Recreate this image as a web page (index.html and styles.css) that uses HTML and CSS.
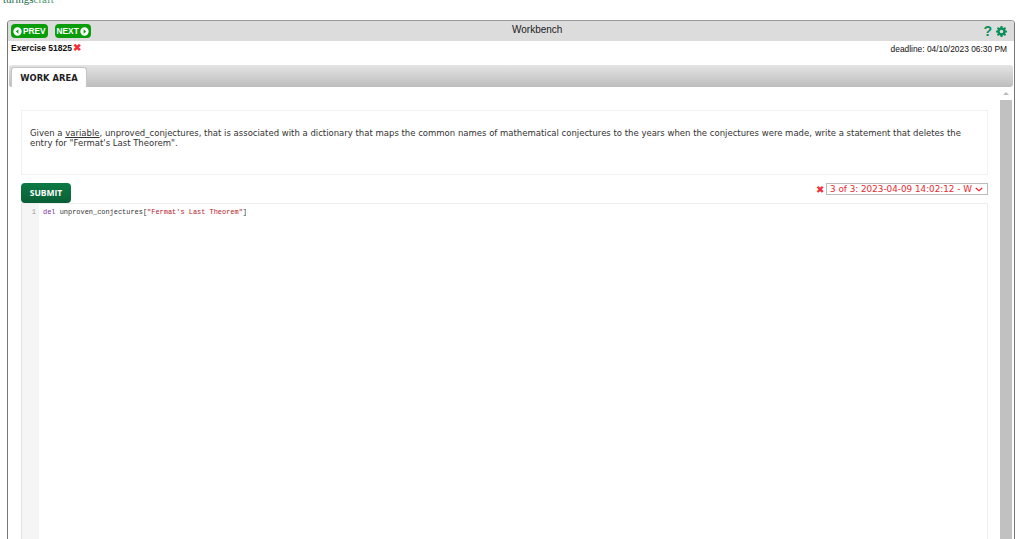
FILE: index.html
```html
<!DOCTYPE html>
<html lang="en">
<head>
<meta charset="utf-8">
<title>Workbench</title>
<link rel="stylesheet" href="styles.css">
</head>
<body>
<header class="logo-bar"><span class="logo">turings<span class="logo-light">craft</span></span></header>
<main class="panel">
  <div class="title-bar">
    <div class="nav">
      <a class="nav-btn"><svg class="nav-icon" viewBox="0 0 10 10"><circle cx="5" cy="5" r="4.6" fill="#fff"/><path d="M6 2.4 3.2 5 6 7.6z" fill="#0a9d0a"/></svg>PREV</a>
      <a class="nav-btn">NEXT<svg class="nav-icon" viewBox="0 0 10 10"><circle cx="5" cy="5" r="4.6" fill="#fff"/><path d="M4 2.4 6.8 5 4 7.6z" fill="#0a9d0a"/></svg></a>
    </div>
    <div class="title">Workbench</div>
    <div class="tools">
      <span class="help">?</span>
      <svg class="gear" viewBox="0 0 12 12"><path fill="#0a8f5b" fill-rule="evenodd" d="M5 0h2l.3 1.6 1.1.5L9.8 1.200 11 2.600 10 3.800l.4 1.200L12 5.200v1.800l-1.600.2-.4 1.100 1 1.300-1.300 1.300-1.300-1-1.100.5L7 12H5l-.3-1.600-1.100-.5-1.300 1L1 9.600l1-1.300-.5-1.100L0 7V5.200l1.500-.2.500-1.200-1-1.200 1.300-1.400 1.300.9 1.100-.5zM6 4a2 2 0 1 0 0 4 2 2 0 0 0 0-4z"/></svg>
    </div>
  </div>
  <div class="info-row">
    <div class="exercise">Exercise 51825<span class="cross">✖</span></div>
    <div class="deadline">deadline: 04/10/2023 06:30 PM</div>
  </div>
  <div class="tab-bar"><div class="tab">WORK AREA</div></div>
  <div class="body-row">
    <div class="content">
      <section class="problem">
        <p>Given a <u>variable</u>, unproved_conjectures, that is associated with a dictionary that maps the common names of mathematical conjectures to the years when the conjectures were made, write a statement that deletes the entry for "Fermat's Last Theorem".</p>
      </section>
      <div class="actions">
        <button class="submit">SUBMIT</button>
        <div class="attempt">
          <span class="cross">✖</span>
          <div class="select"><span class="select-text">3 of 3: 2023-04-09 14:02:12 - W</span><svg class="chevron" viewBox="0 0 10 6"><path d="M1 1l4 3.500L9 1" fill="none" stroke="#e8282f" stroke-width="1.600"/></svg></div>
        </div>
      </div>
      <div class="editor">
        <div class="gutter">1</div>
        <div class="code"><span class="kw">del</span> unproven_conjectures[<span class="str">"Fermat's Last Theorem"</span>]</div>
      </div>
    </div>
    <div class="scrollbar">
      <div class="arrow"></div>
      <div class="thumb"></div>
    </div>
  </div>
</main>
</body>
</html>
```
FILE: styles.css
```css
* { box-sizing: border-box; }
html, body { margin: 0; height: 539px; overflow: hidden; background: #fff; }
body { font-family: "Liberation Sans", Arial, sans-serif; color: #111; }

.logo-bar { height: 20px; padding-left: 3px; overflow: hidden; }
.logo { display: block; margin-top: -9px; font: 11px/16px "Liberation Serif", serif; color: #1d6b4a; }
.logo-light { color: #4f9a72; }

.panel {
  margin: 0 9px 0 7px;
  height: 519px;
  border: 1px solid #777;
  border-bottom: 0;
  border-top-color: #999;
  border-radius: 4px 4px 0 0;
  display: flex;
  flex-direction: column;
  overflow: hidden;
}

.title-bar {
  height: 20px;
  flex: none;
  background: #dcdcdc;
  display: grid;
  grid-template-columns: 501px auto 1fr;
  align-items: center;
  padding: 0 7px 0 3px;
}
.nav { display: flex; gap: 7px; }
.nav-btn {
  display: flex;
  align-items: center;
  gap: 1px;
  height: 14px;
  padding: 0 2px;
  background: #0a9d0a;
  border-radius: 4px;
  color: #fff;
  font-size: 8.300px;
  font-weight: 700;
}
.nav-icon { width: 9px; height: 9px; }
.title { font-size: 10px; line-height: 12px; padding-bottom: 2px; color: #222; }
.tools { display: flex; justify-content: flex-end; align-items: center; gap: 4px; }
.help { color: #0a8f5b; font-size: 14px; line-height: 14px; font-weight: 700; }
.gear { width: 11px; height: 11px; }

.info-row {
  height: 24px;
  flex: none;
  display: flex;
  justify-content: space-between;
  padding: 2px 7px 0 3px;
  font-size: 8.500px;
  line-height: 10px;
}
.exercise { font-weight: 700; }
.deadline { padding-top: 1px; font-size: 8.400px; }
.cross { color: #f2303a; font-size: 10px; margin-left: 1px; }

.tab-bar {
  height: 22px;
  flex: none;
  margin: 0 1px;
  padding: 2px 0 0 2px;
  background: linear-gradient(#e4e4e4, #bdbdbd);
  border-radius: 3px;
}
.tab {
  width: 76px;
  height: 20px;
  background: #fff;
  border: 1px solid #c4c4c4;
  border-bottom: 0;
  border-radius: 3px 3px 0 0;
  text-align: center;
  font: 700 8.400px/20px "DejaVu Sans", sans-serif;
  color: #222;
}

.body-row { flex: 1; display: flex; min-height: 0; }
.content { flex: 1; min-width: 0; padding: 23px 12px 0 13px; }
.problem {
  height: 65px;
  border: 1px solid #f1f1f1;
  padding: 17px 8px 0;
}
.problem p { margin: 0; font: 8.500px/10px "DejaVu Sans", Verdana, sans-serif; color: #333; }
.actions {
  height: 28px;
  padding-top: 8px;
  display: flex;
  justify-content: space-between;
  align-items: flex-start;
}
.submit {
  width: 50px;
  height: 20px;
  border: 0;
  padding: 0 0 1px;
  border-radius: 4px;
  background: linear-gradient(#0c7a45, #0a5e35);
  color: #fff;
  font: 700 8.500px "Open Sans", sans-serif;
}
.attempt { display: flex; align-items: center; gap: 2px; height: 12px; }
.attempt .cross { margin-left: 0; }
.select {
  width: 162px;
  height: 12px;
  display: flex;
  align-items: center;
  justify-content: space-between;
  padding: 0 4px 0 3px;
  border: 1px solid #bbb;
  font: 8.800px "DejaVu Sans", sans-serif;
  color: #e8282f;
  white-space: nowrap;
}
.chevron { width: 8px; height: 5px; flex: none; }
.editor {
  height: 400px;
  display: flex;
  border: 1px solid #eee;
  border-left-color: #e2e2e2;
}
.gutter {
  width: 17px;
  flex: none;
  background: #f5f5f5;
  padding: 3px 3px 0 0;
  text-align: right;
  font: 7px/10px "Liberation Mono", monospace;
  color: #999;
}
.code { padding: 3px 0 0 4px; font: 6.950px/10px "Liberation Mono", monospace; color: #333; white-space: pre; }
.kw { color: #7a2a9a; }
.str { color: #b3202a; }

.scrollbar { width: 14px; flex: none; background: #fff; display: flex; flex-direction: column; padding-right: 2px; }
.arrow { height: 13px; position: relative; }
.arrow::after {
  content: "";
  position: absolute;
  left: 3px;
  top: 5px;
  border: 3px solid transparent;
  border-top: 0;
  border-bottom: 3px solid #bbb;
}
.thumb { flex: 1; background: #c1c1c1; }
```
